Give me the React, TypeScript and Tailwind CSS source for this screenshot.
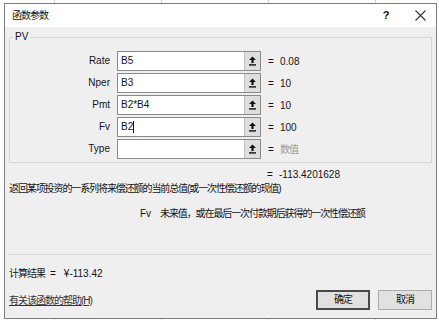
const font = "font-['Liberation_Sans','Noto_Sans_CJK_SC',sans-serif]"

function PickIcon() {
  return (
    <svg width="9" height="10" viewBox="0 0 9 10" className="text-[#111]">
      <path d="M4.5 0.5 L8 4 L5.6 4 L5.6 7 L3.4 7 L3.4 4 L1 4 Z" fill="currentColor" />
      <rect x="1" y="8.2" width="7" height="1.4" fill="currentColor" />
    </svg>
  )
}

const args = [
  { label: 'Rate', text: 'B5', value: '0.08' },
  { label: 'Nper', text: 'B3', value: '10' },
  { label: 'Pmt', text: 'B2*B4', value: '10' },
  { label: 'Fv', text: 'B2', value: '100', caret: true },
  { label: 'Type', text: '', value: '数值', hint: true },
]

export default function App() {
  return (
    <div
      className={`w-[439px] h-[320px] overflow-hidden bg-white pt-[3px] pl-[4px] pr-[2px] pb-[1px] ${font} text-[10px] bg-[repeating-linear-gradient(90deg,transparent_0_54px,#d4d4d4_54px_55px,transparent_55px_107px)] text-[#141414]`}
    >
      <div className="h-full flex flex-col border border-[#7c7c7c] bg-[#efefef]">
        {/* 标题栏 */}
        <div className="h-[23px] bg-white flex items-center pl-[7px] pr-[8px]">
          <span className="flex-1 tracking-[-1px]">函数参数</span>
          <span className="w-[14px] text-center mr-[22px] text-[11px] font-bold">?</span>
          <svg width="11" height="11" viewBox="0 0 11 11" className="mr-[2px]">
            <path d="M0.5 0.5 L10.5 10.5 M10.5 0.5 L0.5 10.5" stroke="#333" strokeWidth="1.1" />
          </svg>
        </div>

        <div className="px-[4px] flex flex-col">
          {/* 参数分组 */}
          <fieldset className="mt-[3px] h-[133px] border border-[#d6d6d6] px-0 pt-[7px]">
            <legend className="ml-[3px] px-[2px] leading-[14px]">PV</legend>
            <div className="flex flex-col gap-[2px]">
              {args.map((a) => (
                <div key={a.label} className="flex items-center h-[20px]">
                  <span className="w-[100px] text-right leading-[20px]">{a.label}</span>
                  <div className="ml-[7px] w-[144px] h-[20px] flex border border-[#8a8a8a] bg-white">
                    <span className="flex-1 pl-[3px] leading-[18px] flex items-center">
                      {a.text}
                      {a.caret && <span className="inline-block w-px h-[12px] bg-[#111]" />}
                    </span>
                    <span className="w-[16px] bg-[#dedede] border-l border-[#c4c4c4] flex items-center justify-center">
                      <PickIcon />
                    </span>
                  </div>
                  <span className="ml-[6px] w-[8px] text-center">=</span>
                  <span className={`ml-[5px] ${a.hint ? 'text-[#9a9a9a] tracking-[-1px]' : ''}`}>{a.value}</span>
                </div>
              ))}
            </div>
          </fieldset>

          <div className="mt-[4px] h-[14px] flex items-center">
            <span className="ml-[257px] w-[8px] text-center">=</span>
            <span className="ml-[5px]">-113.4201628</span>
          </div>
          <div className="h-[14px] flex items-center tracking-[-1.1px]">
            返回某项投资的一系列将来偿还额的当前总值(或一次性偿还额的现值)
          </div>
          <div className="mt-[11px] h-[14px] flex items-center">
            <span className="ml-[131px] w-[20px]">Fv</span>
            <span className="tracking-[-1.1px]">未来值，或在最后一次付款期后获得的一次性偿还额</span>
          </div>

          <div className="mt-[34px] h-px bg-[#d6d6d6]" />

          <div className="mt-[11px] h-[14px] flex items-center">
            <span className="tracking-[-1px]">计算结果</span>
            <span className="ml-[5px]">=</span>
            <span className="ml-[8px]">¥-113.42</span>
          </div>

          <div className="mt-[10px] h-[20px] flex items-center">
            <span className="flex-1 underline text-[#333] tracking-[-1px]">有关该函数的帮助(H)</span>
            <button className="w-[54px] h-[20px] bg-[#e1e1e1] border-2 border-[#4a4a4a] leading-none tracking-[-1px]">
              确定
            </button>
            <button className="ml-[8px] w-[54px] h-[20px] bg-[#e1e1e1] border border-[#adadad] leading-none tracking-[-1px]">
              取消
            </button>
          </div>
        </div>
      </div>
    </div>
  )
}
